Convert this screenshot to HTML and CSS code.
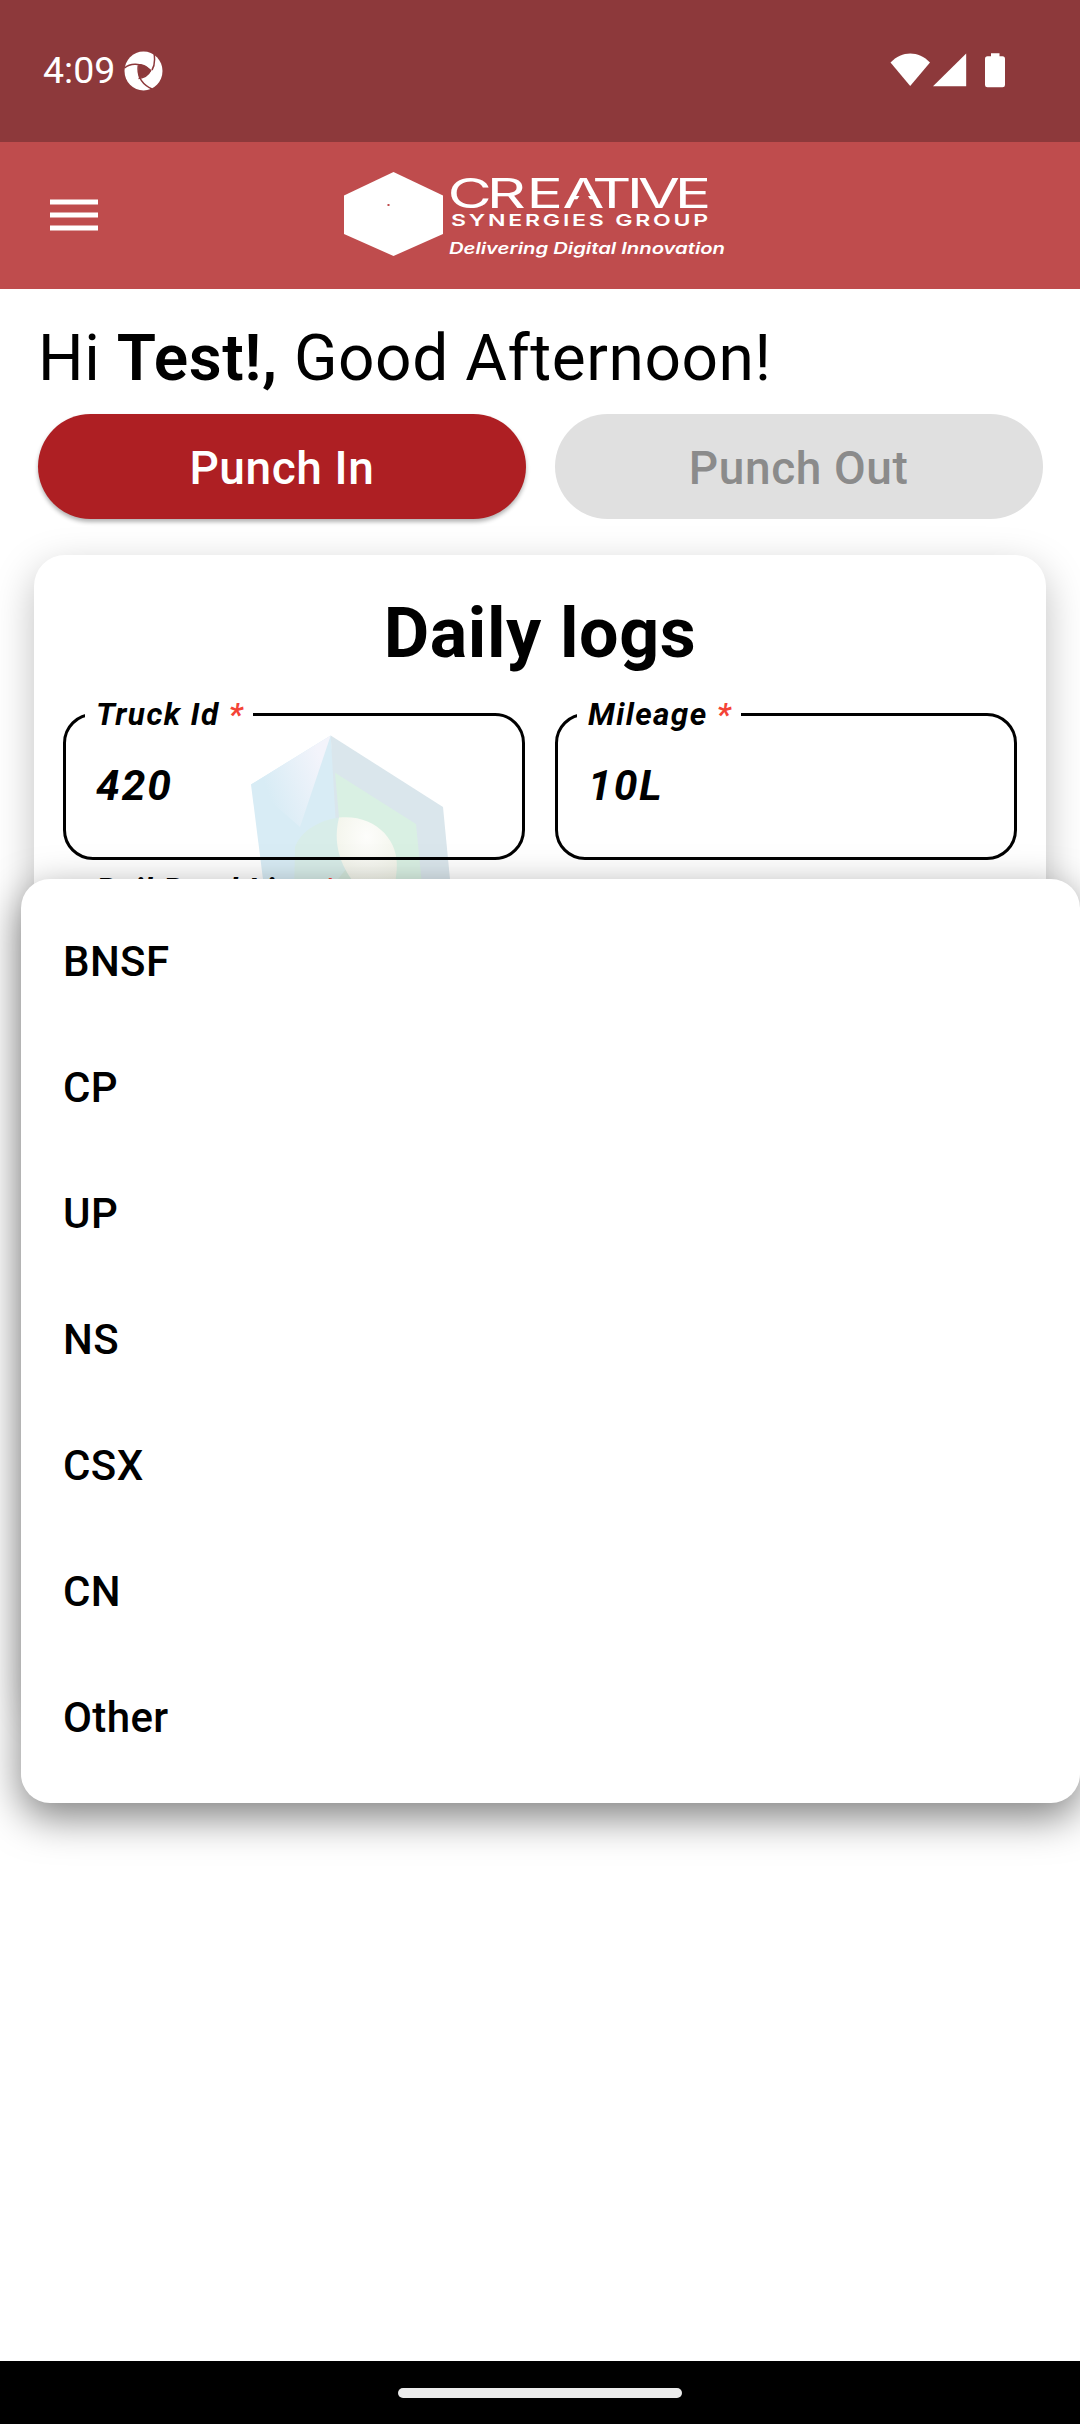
FILE: index.html
```html
<!DOCTYPE html>
<html lang="en">
<head>
<meta charset="utf-8">
<title>Daily logs</title>
<link rel="stylesheet" href="styles.css">
</head>
<body>
<div class="screen">
  <div class="status-bar">
    <span class="clock">4:09</span>
    <svg class="status-app" viewBox="0 0 39 40" width="39" height="40">
      <ellipse cx="19.5" cy="20" rx="19" ry="19.5" fill="#fff"/>
      <path class="slit" d="M0.5 17C6 12 16 11 27 19.500M28 19C31 14 31 8 30 2M27 19C24 25 20 27 14.500 27.500M14.500 13C13 22 15 32 28 38"/>
      <path fill="#8d393b" d="M15 13C20 13 24 15.500 27 20C24 24 20 26.500 15.500 27C14 22 14 17 15 13Z"/>
    </svg>
    <svg class="status-icons" viewBox="0 0 116 36" width="116" height="36" fill="#fff">
      <path d="M0.500 9.500C12 -2.500 28.500 -2.500 40 9.500L20.200 33Z"/>
      <path d="M43 33.200H76.200V0.500Z"/>
      <path d="M101 0.300H109.500V3.200H112.500Q115 3.200 115 6V32Q115 34.200 112.500 34.200H97.500Q95 34.200 95 32V6Q95 3.200 97.500 3.200H101Z"/>
    </svg>
  </div>
  <header class="app-bar">
    <svg class="menu-icon" viewBox="0 0 48 32" width="48" height="32" fill="#fff"><path d="M0 0.500h48v5H0zM0 13.500h48v5H0zM0 26.500h48v5H0z"/></svg>
    <svg class="logo" viewBox="0 0 386 90" width="386" height="90" fill="#fff">
      <path d="M49.500 2L99 25.500V64L49.500 86L0 64V25.500Z"/>
      <rect x="43.500" y="34" width="2" height="2" fill="#bf4c4d"/>
      <text class="logo-name" transform="translate(103.500 38) scale(1.5 1)" x="0 26.1 52.7 76.700 96.500 119.5 127 151.500">CREATIVE</text>
      <path fill="#bf4c4d" d="M236.700 24H242.700L247.500 31.500H231.900Z"/>
      <text class="logo-group" x="107" y="56" textLength="260" lengthAdjust="spacingAndGlyphs">SYNERGIES GROUP</text>
      <text class="logo-tag" x="105" y="84" textLength="276" lengthAdjust="spacingAndGlyphs">Delivering Digital Innovation</text>
    </svg>
  </header>
  <main class="content">
    <h1 class="greeting">Hi <b>Test!,</b> Good Afternoon!</h1>
    <div class="actions">
      <button class="btn btn-in">Punch In</button>
      <button class="btn btn-out" disabled>Punch Out</button>
    </div>
    <section class="card">
      <svg class="watermark" viewBox="0 0 205 160" width="205" height="160">
        <defs>
          <linearGradient id="shine" x1="0.2" y1="0.6" x2="0.900" y2="0.300"><stop offset="0" stop-color="#d8ecf5"/><stop offset="1" stop-color="#f3f4fb"/></linearGradient>
          <radialGradient id="pearl" cx="0.500" cy="0.250" r="0.700"><stop offset="0" stop-color="#fdfdfb"/><stop offset="1" stop-color="#f1f3e8"/></radialGradient>
        </defs>
        <path fill="#d8ecf5" d="M1 49.500L80.700 0.500L95 160H15Z"/>
        <path fill="url(#shine)" d="M1 49.500L80.700 0.500L50 92Z"/>
        <path fill="#dae6ec" d="M80.700 0.500L193 72L201.500 160H90Z"/>
        <path fill="#d9f0e3" d="M85 37.700L166 89L173 160H90L89 82.500Z"/>
        <path fill="#d8ede9" d="M89 82.500C66 86 50 98 45 112L44 160H110Z"/>
        <path fill="#d4e8dc" d="M97 133L75 160H115Z"/>
        <path fill="url(#pearl)" d="M89 82.500C125 79 150 105 146.700 135L144 160H115C95 140 81 115 89 82.500Z"/>
      </svg>
      <h2 class="card-title">Daily logs</h2>
      <div class="fields">
        <fieldset class="field"><legend>Truck Id <i>*</i></legend><span>420</span></fieldset>
        <fieldset class="field"><legend>Mileage <i>*</i></legend><span>10L</span></fieldset>
        <fieldset class="field field-wide"><legend>Rail Road Line <i>*</i></legend></fieldset>
      </div>
    </section>
    <ul class="dropdown">
      <li>BNSF</li><li>CP</li><li>UP</li><li>NS</li><li>CSX</li><li>CN</li><li>Other</li>
    </ul>
  </main>
  <div class="nav-bar"><div class="nav-pill"></div></div>
</div>
</body>
</html>
```

FILE: styles.css
```css
* { box-sizing: border-box; }
body { margin: 0; background: #fff; color: #000; font-family: Roboto, "Liberation Sans", sans-serif; }
.screen { width: 1080px; height: 2424px; display: flex; flex-direction: column; overflow: hidden; position: relative; }
.status-bar { height: 142px; flex: none; background: #8d393b; color: #fff; display: flex; align-items: center; padding: 0 74px 0 43px; }
.clock { width: 73px; font-size: 37.5px; line-height: 44px; margin-top: -2px; }
.status-app { margin-left: 8px; }
.slit { fill: none; stroke: #8d393b; stroke-width: 1.5; }
.status-icons { margin-left: auto; }
.app-bar { height: 147px; flex: none; background: #bf4c4d; display: flex; align-items: center; padding: 0 50px 2px; }
.logo { margin-left: 246px; }
.logo-name { font: 400 40.5px Inter, sans-serif; }
.logo-group { font: 600 16.5px Inter, sans-serif; letter-spacing: 2px; }
.logo-tag { font: italic 600 16px Inter, sans-serif; }
.content { flex: 1; display: flex; flex-direction: column; position: relative; min-height: 0; }
.greeting { margin: 32px 0 0 38px; font-size: 64px; line-height: 76px; font-weight: 400; letter-spacing: .55px; white-space: nowrap; }
.greeting b { font-weight: 600; }
.actions { display: grid; grid-template-columns: 1fr 1fr; gap: 29px; padding: 0 37.5px 0 38px; margin-top: 17px; }
.btn { height: 105px; border: 0; border-radius: 53px; padding: 2px 0 0; font: 500 46px/54px Roboto, sans-serif; letter-spacing: .6px; }
.btn-in { background: #ae1f23; color: #fff; box-shadow: 0 3px 4px rgba(0,0,0,.3); }
.btn-out { background: #e0e0e0; color: #8b8b8b; }
.card { flex: none; position: relative; margin: 36px 34px 0; height: 1150px; border-radius: 31px; background: #fff; box-shadow: 0 14px 40px rgba(0,0,0,.25); padding-top: 37px; }
.card-title { margin: 0; text-align: center; font-size: 70px; line-height: 82px; font-weight: 700; letter-spacing: .6px; position: relative; }
.watermark { position: absolute; left: 216px; top: 180px; }
.fields { display: grid; grid-template-columns: 1fr 1fr; gap: 11px 30px; padding: 22px 29px 0; position: relative; }
.field { height: 164px; margin: 0; min-width: 0; border: 3px solid #000; border-radius: 30px; padding: 28px 30px 0; font-style: italic; font-weight: 700; }
.field-wide { grid-column: 1 / 3; }
.field legend { margin-left: -11px; padding: 0 9px 0 11px; font-size: 31.5px; line-height: 37px; font-weight: 700; letter-spacing: 1.4px; }
.field i { color: #f44336; }
.field span { font-size: 42.5px; line-height: 50px; letter-spacing: 2px; }
.dropdown { position: absolute; left: 21px; right: 0; top: 590px; height: 924px; margin: 0; padding: 20px 42px; list-style: none; border-radius: 29px; background: #fff; box-shadow: 0 14px 40px rgba(0,0,0,.5); }
.dropdown li { height: 126px; line-height: 126px; font-size: 42px; font-weight: 500; letter-spacing: .4px; }
.nav-bar { height: 63px; flex: none; background: #000; display: flex; justify-content: center; padding-top: 27px; position: relative; }
.nav-pill { width: 284px; height: 10px; border-radius: 5px; background: #ebebeb; }
```
